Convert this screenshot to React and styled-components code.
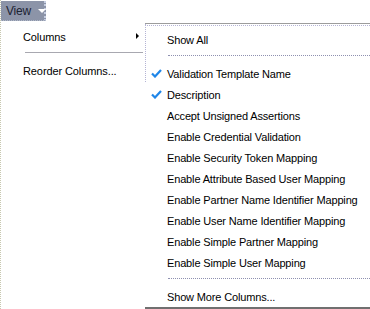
import React from "react";
import styled, { createGlobalStyle } from "styled-components";

const Global = createGlobalStyle`
  html, body { margin: 0; padding: 0; background: #fff; }
  body { font-family: Tahoma, "Liberation Sans", Arial, sans-serif; font-size: 11px; color: #000; }
`;

const Page = styled.div`
  width: 370px;
  height: 309px;
  position: relative;
  overflow: hidden;
  background: #fff;
  border-left: 1px dotted #c8c8b0;
  box-sizing: border-box;
`;

const TopBar = styled.div`
  height: 23px;
  display: flex;
  align-items: flex-start;
`;

const ViewButton = styled.div`
  margin: 1px 0 0 0;
  width: 45px;
  height: 20px;
  box-sizing: border-box;
  background: #8c94a8;
  display: flex;
  align-items: center;
  padding-left: 5px;
  gap: 7px;
  color: #1c2333;
  font-size: 12px;
  letter-spacing: -0.2px;
  border-right: 2px dotted #c4cce0;
  border-bottom: 1px dotted #b0b8c8;
`;

const Caret = styled.span`
  width: 0;
  height: 0;
  border-left: 4px solid transparent;
  border-right: 4px solid transparent;
  border-top: 4px solid #fff;
  margin-top: 1px;
`;

const Menus = styled.div`
  display: flex;
  align-items: flex-start;
`;

const MainMenu = styled.div`
  width: 144px;
  padding-top: 3px;
  display: flex;
  flex-direction: column;
`;

const MainItem = styled.div`
  height: 21px;
  display: flex;
  align-items: center;
  justify-content: space-between;
  padding-left: 22px;
  padding-right: 6px;
  font-size: 11px;
  letter-spacing: -0.1px;
  white-space: nowrap;
`;

const Arrow = styled.span`
  width: 0;
  height: 0;
  border-top: 3px solid transparent;
  border-bottom: 3px solid transparent;
  border-left: 3px solid #000;
  margin-top: -2px;
`;

const MainSep = styled.div`
  margin: 5px 0 7px 24px;
  width: 118px;
  border-top: 1px solid #a8a8b0;
`;

const SubMenu = styled.div`
  flex: 1;
  position: relative;
  border-top: 1px solid #9c9c9c;
  border-bottom: 2px solid #707070;
  padding-top: 5px;
  display: flex;
  flex-direction: column;
  &::before {
    content: "";
    position: absolute;
    left: 0;
    top: 1px;
    right: 0;
    border-top: 1px dotted #b4b4d4;
  }
  &::after {
    content: "";
    position: absolute;
    left: 0;
    top: 0;
    height: 58px;
    border-left: 1px dotted #b4b4d4;
  }
`;

const SubItem = styled.div`
  height: 21px;
  display: flex;
  align-items: center;
  padding-left: 6px;
  font-size: 11px;
  letter-spacing: -0.15px;
  white-space: nowrap;
`;

const CheckSlot = styled.span`
  width: 16px;
  flex: none;
  display: flex;
  align-items: center;
`;

const SubSep = styled.div`
  margin: 5px 0 7px 23px;
  border-top: 1px dotted #8e90b0;
`;

const Check = () => (
  <svg width="11" height="9" viewBox="0 0 11 9">
    <path d="M1 4.5 L4 7.5 L10 1" stroke="#1f86e8" strokeWidth="2.2" fill="none" />
  </svg>
);

const columns = [
  { label: "Validation Template Name", checked: true },
  { label: "Description", checked: true },
  { label: "Accept Unsigned Assertions" },
  { label: "Enable Credential Validation" },
  { label: "Enable Security Token Mapping" },
  { label: "Enable Attribute Based User Mapping" },
  { label: "Enable Partner Name Identifier Mapping" },
  { label: "Enable User Name Identifier Mapping" },
  { label: "Enable Simple Partner Mapping" },
  { label: "Enable Simple User Mapping" },
];

export default function App() {
  return (
    <Page>
      <Global />
      <TopBar>
        <ViewButton>
          View <Caret />
        </ViewButton>
      </TopBar>
      <Menus>
        <MainMenu>
          <MainItem>
            Columns <Arrow />
          </MainItem>
          <MainSep />
          <MainItem>Reorder Columns...</MainItem>
        </MainMenu>
        <SubMenu>
          <SubItem>
            <CheckSlot />
            Show All
          </SubItem>
          <SubSep />
          {columns.map((c) => (
            <SubItem key={c.label}>
              <CheckSlot>{c.checked && <Check />}</CheckSlot>
              {c.label}
            </SubItem>
          ))}
          <SubSep />
          <SubItem>
            <CheckSlot />
            Show More Columns...
          </SubItem>
        </SubMenu>
      </Menus>
    </Page>
  );
}
